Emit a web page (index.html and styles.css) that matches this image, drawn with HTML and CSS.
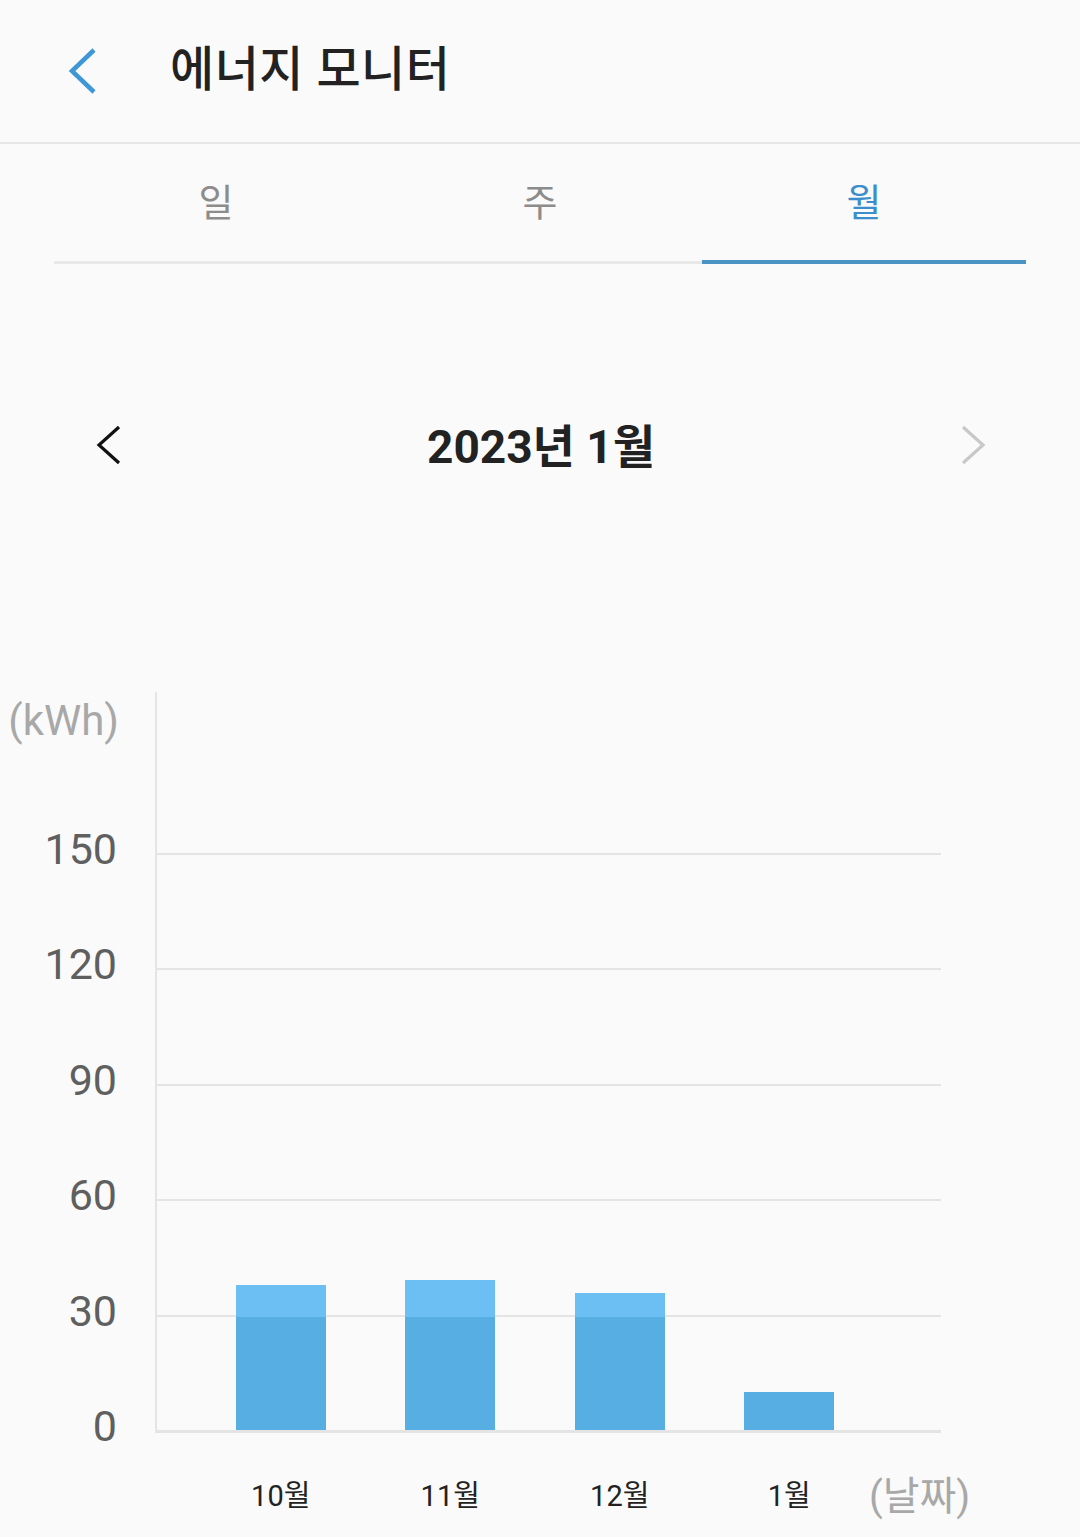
FILE: index.html
```html
<!DOCTYPE html>
<html lang="ko">
<head>
  <meta charset="UTF-8">
  <title>에너지 모니터</title>
  <link rel="stylesheet" href="styles.css">
</head>
<body>

  <header class="app-bar">
    <button class="back" aria-label="뒤로">
      <svg width="30" height="48" viewBox="0 0 30 48">
        <polyline points="26,3 4,24 26,45" fill="none" stroke="#3f97d7" stroke-width="4.5"/>
      </svg>
    </button>
    <h1>에너지 모니터</h1>
  </header>

  <nav class="tabs">
    <div class="tab">일</div>
    <div class="tab">주</div>
    <div class="tab active">월</div>
  </nav>

  <div class="period">
    <span class="arrow">
      <svg width="26" height="40" viewBox="0 0 26 40">
        <polyline points="23,2 3,20 23,38" fill="none" stroke="#111" stroke-width="3.2"/>
      </svg>
    </span>
    <h2>2023년 1월</h2>
    <span class="arrow">
      <svg width="26" height="40" viewBox="0 0 26 40">
        <polyline points="3,2 23,20 3,38" fill="none" stroke="#c8c8c8" stroke-width="3.2"/>
      </svg>
    </span>
  </div>

  <section class="chart">
    <div class="y-axis">
      <div class="unit">(kWh)</div>
      <div class="tick">150</div>
      <div class="tick">120</div>
      <div class="tick">90</div>
      <div class="tick">60</div>
      <div class="tick">30</div>
      <div class="tick">0</div>
    </div>
    <div class="plot">
      <div class="bar" style="height: 145px"></div>
      <div class="bar" style="height: 150px"></div>
      <div class="bar" style="height: 137px"></div>
      <div class="bar" style="height: 38px"></div>
    </div>
  </section>

  <div class="x-axis">
    <span>10월</span>
    <span>11월</span>
    <span>12월</span>
    <span>1월</span>
    <span class="unit">(날짜)</span>
  </div>

</body>
</html>
```

FILE: styles.css
```css
body {
  margin: 0;
  background-color: #fafafa;
  font-family: "Roboto", "Noto Sans CJK KR", sans-serif;
  color: #222;
}

.app-bar {
  height: 142px;
  display: flex;
  align-items: center;
  border-bottom: 2px solid #e6e6e6;
}

.back {
  background: none;
  border: none;
  padding: 0;
  margin-left: 68px;
  width: 30px;
  height: 48px;
  display: flex;
}

.app-bar h1 {
  margin: 0 0 12px 72px;
  font-size: 48px;
  font-weight: 500;
  letter-spacing: 0.5px;
  color: #222;
}

.tabs {
  display: flex;
  margin: 0 54px;
  align-items: flex-start;
}

.tab {
  box-sizing: border-box;
  flex: 1;
  height: 120px;
  padding-bottom: 6px;
  display: flex;
  align-items: center;
  justify-content: center;
  font-size: 38px;
  color: #8c8c8c;
  border-bottom: 3px solid #e8e8e8;
}

.tab.active {
  color: #3b8ecb;
  border-bottom: 4px solid #4a93c5;
}

.period {
  height: 100px;
  margin-top: 131px;
  display: flex;
  align-items: center;
  justify-content: space-between;
  padding: 0 94px 0 96px;
}

.period h2 {
  margin: 0 0 4px;
  font-size: 46px;
  font-weight: 700;
  color: #222;
}

.arrow {
  display: flex;
}

.chart {
  display: flex;
  margin-top: 197px;
}

.y-axis {
  width: 117px;
  height: 741px;
  display: flex;
  flex-direction: column;
  align-items: flex-end;
  font-size: 43px;
  color: #5f5f5f;
}

.y-axis .unit {
  flex-shrink: 0;
  height: 58px;
  line-height: 58px;
  font-size: 42px;
  color: #a8a8a8;
  margin: 0 -2px 42px 0;
}

.tick {
  flex-shrink: 0;
  height: 115.4px;
  line-height: 115.4px;
}

.plot {
  box-sizing: border-box;
  margin-left: 38px;
  width: 786px;
  height: 741px;
  border-left: 2px solid #e4e4e4;
  border-bottom: 3px solid #e4e4e4;
  padding-left: 39px;
  display: grid;
  grid-template-columns: repeat(4, 169.5px);
  align-items: end;
  justify-items: center;
  background-image: repeating-linear-gradient(to top, transparent 0 113.4px, #e4e4e4 113.4px 115.4px);
  background-size: 100% 578px;
  background-position: bottom;
  background-repeat: no-repeat;
}

.bar {
  width: 90px;
  background: linear-gradient(to top, #57aee2 113px, #6bbff2 113px);
}

.x-axis {
  display: grid;
  grid-template-columns: repeat(4, 169.5px) auto;
  align-items: center;
  justify-items: center;
  margin: 30px 0 0 196px;
  height: 60px;
  font-size: 29px;
  color: #222;
}

.x-axis .unit {
  justify-self: start;
  margin-left: -5px;
  font-size: 40px;
  color: #a8a8a8;
}
```
